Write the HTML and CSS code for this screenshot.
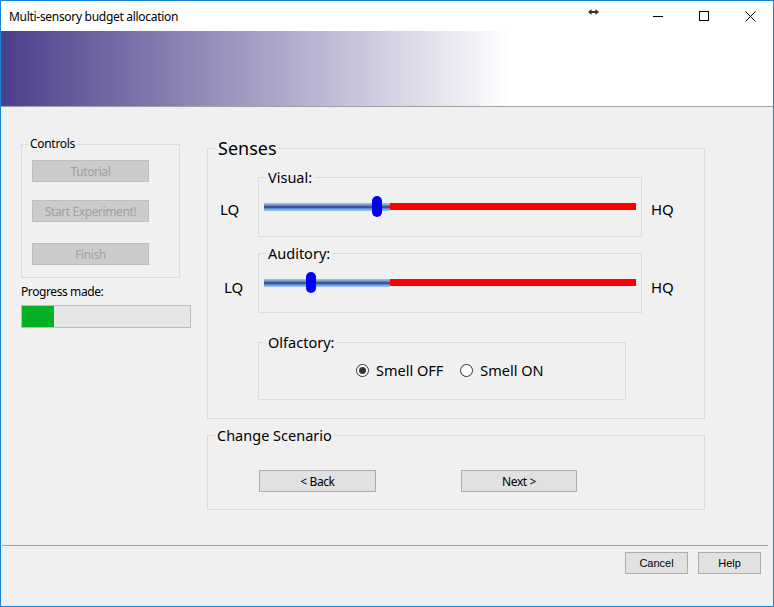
FILE: index.html
```html
<!DOCTYPE html>
<html>
<head>
    <title>Multi-sensory budget allocation</title>
    <link rel="stylesheet" href="styles.css">
</head>
<body>
    <div class="window">
        <div class="titlebar">
            <span class="title">Multi-sensory budget allocation</span>
            <span class="resize-icon">
                <svg width="11" height="6" viewBox="0 0 11 6">
                    <path d="M0 3 L3.5 0 L3.5 6 Z M11 3 L7.5 0 L7.5 6 Z" fill="#333"/>
                    <rect x="3" y="2" width="5" height="2" fill="#333"/>
                </svg>
            </span>
            <span class="caption-btn">
                <svg width="10" height="10" viewBox="0 0 10 10"><path d="M0 5.5 H10" stroke="#000" stroke-width="1"/></svg>
            </span>
            <span class="caption-btn">
                <svg width="10" height="10" viewBox="0 0 10 10"><rect x="0.5" y="0.5" width="9" height="9" fill="none" stroke="#000" stroke-width="1"/></svg>
            </span>
            <span class="caption-btn">
                <svg width="11" height="11" viewBox="0 0 11 11"><path d="M0.5 0.5 L10.5 10.5 M10.5 0.5 L0.5 10.5" stroke="#000" stroke-width="1"/></svg>
            </span>
        </div>

        <div class="banner"></div>

        <div class="main">
            <div class="left-col">
                <fieldset class="group controls">
                    <legend>Controls</legend>
                    <div class="controls-body">
                        <button class="btn btn-disabled" disabled>Tutorial</button>
                        <button class="btn btn-disabled btn-start" disabled>Start Experiment!</button>
                        <button class="btn btn-disabled btn-finish" disabled>Finish</button>
                    </div>
                </fieldset>
                <div class="progress-label">Progress made:</div>
                <div class="progress">
                    <div class="progress-fill" style="width: 32px"></div>
                </div>
            </div>

            <div class="right-col">
                <fieldset class="group senses">
                    <legend>Senses</legend>
                    <div class="senses-body">
                        <div class="sense-row">
                            <span class="q-label lq">LQ</span>
                            <fieldset class="group slider-box">
                                <legend>Visual:</legend>
                                <div class="slider-body">
                                    <div class="slider">
                                        <div class="track-low"></div>
                                        <div class="track-high"></div>
                                        <div class="thumb" style="left: 108px"></div>
                                    </div>
                                </div>
                            </fieldset>
                            <span class="q-label hq">HQ</span>
                        </div>

                        <div class="sense-row sense-row-alt">
                            <span class="q-label lq lq-alt">LQ</span>
                            <fieldset class="group slider-box">
                                <legend>Auditory:</legend>
                                <div class="slider-body">
                                    <div class="slider">
                                        <div class="track-low"></div>
                                        <div class="track-high"></div>
                                        <div class="thumb" style="left: 42px"></div>
                                    </div>
                                </div>
                            </fieldset>
                            <span class="q-label hq">HQ</span>
                        </div>

                        <div class="sense-row olfactory-row">
                            <fieldset class="group olfactory">
                                <legend>Olfactory:</legend>
                                <div class="radio-row">
                                    <label class="radio"><span class="radio-circle checked"></span>Smell OFF</label>
                                    <label class="radio"><span class="radio-circle"></span>Smell ON</label>
                                </div>
                            </fieldset>
                        </div>
                    </div>
                </fieldset>

                <fieldset class="group scenario">
                    <legend>Change Scenario</legend>
                    <div class="scenario-body">
                        <button class="btn btn-back">&lt; Back</button>
                        <button class="btn btn-next">Next &gt;</button>
                    </div>
                </fieldset>
            </div>
        </div>

        <div class="separator"></div>
        <div class="footer">
            <button class="btn-small">Cancel</button>
            <button class="btn-small">Help</button>
        </div>
    </div>
</body>
</html>
```

FILE: styles.css
```css
body {
    margin: 0;
    font-family: "Noto Sans", sans-serif;
    color: #000;
}

.window {
    width: 774px;
    height: 607px;
    box-sizing: border-box;
    border: 1px solid #1883d7;
    background: #f0f0f0;
    display: flex;
    flex-direction: column;
}

/* title bar */
.titlebar {
    height: 30px;
    flex-shrink: 0;
    background: #fff;
    display: flex;
    align-items: center;
}

.title {
    flex: 1;
    padding-left: 8px;
    font-size: 12px;
    letter-spacing: -0.3px;
}

.resize-icon {
    width: 20px;
    margin-right: 32px;
    align-self: flex-start;
    padding-top: 8px;
    display: flex;
    justify-content: center;
}

.caption-btn {
    width: 46px;
    height: 30px;
    display: flex;
    justify-content: center;
    align-items: center;
}

.banner {
    height: 75px;
    flex-shrink: 0;
    background: linear-gradient(to right, #4a3f8a 0, #ffffff 510px);
    border-bottom: 1px solid #a0a0a0;
}

/* body */
.main {
    height: 438px;
    flex-shrink: 0;
    display: flex;
    gap: 16px;
    padding-left: 20px;
}

.left-col {
    width: 170px;
    padding-top: 29px;
}

.right-col {
    width: 498px;
    padding-top: 31px;
}

.group {
    margin: 0;
    padding: 0;
    min-width: 0;
    border: 1px solid #dcdcdc;
    box-sizing: border-box;
}

.group > legend {
    padding: 0 2px;
    margin-left: 7px;
    font-size: 14.5px;
    line-height: 18px;
}

.btn {
    display: block;
    height: 22px;
    box-sizing: border-box;
    border: 1px solid #adadad;
    background: #e1e1e1;
    font-family: "Noto Sans", sans-serif;
    font-size: 12px;
    letter-spacing: -0.4px;
    color: #000;
    padding: 0;
}

.btn-disabled {
    width: 117px;
    background: #cccccc;
    border-color: #bfbfbf;
    color: #a0a0a0;
}

/* controls */
.controls {
    width: 159px;
}

.controls > legend {
    font-size: 12px;
    line-height: 16px;
    margin-left: 6px;
    letter-spacing: -0.3px;
}

.controls-body {
    padding: 8px 0 12px 10px;
}

.btn-start {
    margin-top: 18px;
}

.btn-finish {
    margin-top: 21px;
}

.progress-label {
    margin-top: 6px;
    font-size: 12px;
    line-height: 16px;
    letter-spacing: -0.4px;
}

.progress {
    margin-top: 5px;
    width: 170px;
    height: 23px;
    box-sizing: border-box;
    border: 1px solid #bcbcbc;
    background: #e6e6e6;
}

.progress-fill {
    height: 100%;
    background: #06b025;
}

/* senses */
.senses {
    width: 498px;
}

.senses > legend {
    font-size: 18px;
    line-height: 20px;
    margin-left: 8px;
}

.senses-body {
    padding: 10px 0 18px 0;
}

.sense-row {
    display: flex;
}

.sense-row + .sense-row {
    margin-top: 7px;
}

.sense-row.olfactory-row {
    margin-top: 20px;
    padding-left: 50px;
}

.q-label {
    margin-top: 32px;
    font-size: 15px;
    line-height: 18px;
}

.sense-row-alt .q-label {
    margin-top: 34px;
}

.lq {
    width: 50px;
    box-sizing: border-box;
    padding-left: 12px;
}

.lq-alt {
    padding-left: 16px;
}

.hq {
    margin-left: 9px;
}

.slider-box {
    width: 384px;
}

.slider-body {
    padding: 10px 5px 19px 5px;
}

.slider {
    position: relative;
    width: 372px;
    height: 21px;
    display: flex;
    align-items: center;
}

.track-low {
    width: 126px;
    height: 8px;
    background: linear-gradient(#93d2f2 0%, #6d9fd2 25%, #3c3784 50%, #6d9fd2 75%, #93d2f2 100%);
}

.track-high {
    width: 246px;
    height: 7px;
    background: #ff0000;
}

.thumb {
    position: absolute;
    top: 0;
    width: 10px;
    height: 21px;
    border-radius: 5px;
    background: #0000ff;
}

/* olfactory */
.olfactory {
    width: 368px;
}

.radio-row {
    display: flex;
    gap: 17px;
    padding: 10px 0 20px 97px;
}

.radio {
    display: flex;
    align-items: center;
    gap: 7px;
    font-size: 14.5px;
    line-height: 18px;
}

.radio-circle {
    width: 13px;
    height: 13px;
    box-sizing: border-box;
    border: 1px solid #333;
    border-radius: 50%;
    background: #fff;
    display: flex;
    justify-content: center;
    align-items: center;
}

.radio-circle.checked::after {
    content: "";
    width: 7px;
    height: 7px;
    border-radius: 50%;
    background: #333;
}

/* scenario */
.scenario {
    width: 498px;
    margin-top: 7px;
}

.scenario-body {
    display: flex;
    gap: 85px;
    padding: 26px 0 17px 51px;
}

.btn-back {
    width: 117px;
}

.btn-next {
    width: 116px;
}

/* footer */
.separator {
    height: 0;
    border-top: 1px solid #a0a0a0;
    margin: 0 5px 0 1px;
}

.footer {
    display: flex;
    justify-content: flex-end;
    gap: 10px;
    padding: 6px 12px 0 0;
}

.btn-small {
    width: 63px;
    height: 22px;
    box-sizing: border-box;
    border: 1px solid #adadad;
    background: #e1e1e1;
    font-family: "Liberation Sans", Arial, sans-serif;
    font-size: 11px;
    color: #000;
    padding: 0;
}
```
